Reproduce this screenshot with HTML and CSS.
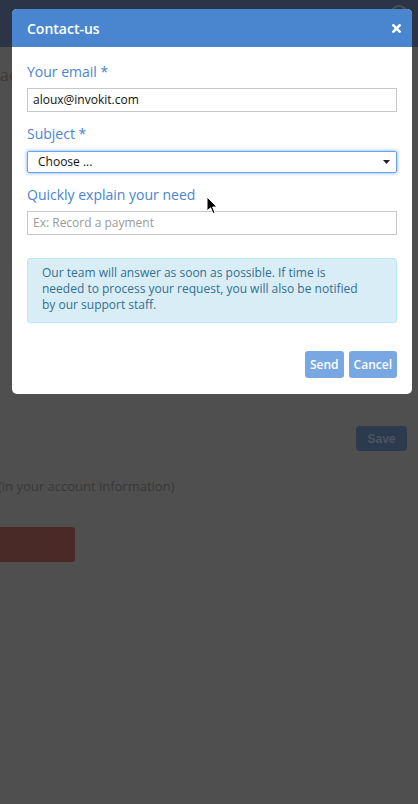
FILE: index.html
```html
<!DOCTYPE html>
<html lang="en">
<head>
<meta charset="utf-8">
<title>Contact-us</title>
<link rel="stylesheet" href="styles.css">
</head>
<body>
<div class="page">
  <div class="topbar">
    <svg class="topbar-user" width="22" height="14" viewBox="0 0 22 14"><path d="M3 12 A8 8 0 0 1 19 12" fill="none" stroke="#4a4f57" stroke-width="2"/></svg>
  </div>
  <div class="page-content">
    <div class="page-title">ad</div>
    <div class="save-row"><span class="btn-save">Save</span></div>
    <p class="note">(in your account information)</p>
    <div class="btn-danger"></div>
  </div>
</div>

<div class="modal">
  <div class="modal-header">
    <span class="modal-title">Contact-us</span>
    <svg class="close" width="9" height="9" viewBox="0 0 9 9"><path d="M1.4 1.4 L7.6 7.6 M7.6 1.4 L1.4 7.6" stroke="#fff" stroke-width="2.6" stroke-linecap="square"/></svg>
  </div>
  <div class="modal-body">
    <div class="group">
      <label class="label">Your email *</label>
      <div class="input">aloux@invokit.com</div>
    </div>
    <div class="group">
      <label class="label">Subject *</label>
      <div class="select">
        <span>Choose ...</span>
        <svg class="caret" width="7" height="4" viewBox="0 0 7 4"><path d="M0 0 H7 L3.5 4 Z" fill="#222"/></svg>
      </div>
    </div>
    <div class="group">
      <label class="label">Quickly explain your need</label>
      <div class="input placeholder">Ex: Record a payment</div>
    </div>
    <div class="alert">Our team will answer as soon as possible. If time is needed to process your request, you will also be notified by our support staff.</div>
  </div>
  <div class="modal-footer">
    <span class="btn">Send</span>
    <span class="btn">Cancel</span>
  </div>
</div>

<svg class="cursor" width="13" height="20" viewBox="0 0 13 20"><path d="M1 1 L1 15 L4.5 11.8 L7 17.5 L9 16.6 L6.6 11 L11 11 Z" fill="#000" stroke="#fff" stroke-width="1" stroke-linejoin="round"/></svg>
</body>
</html>
```
FILE: styles.css
```css
html, body {
  margin: 0;
  padding: 0;
}
body {
  width: 418px;
  height: 804px;
  overflow: hidden;
  background: #4f4f4f;
  font-family: "Open Sans", "DejaVu Sans", sans-serif;
  position: relative;
}
.page {
  display: flex;
  flex-direction: column;
}
.topbar {
  height: 47px;
  background: #2b3547;
  position: relative;
}
.topbar-user {
  position: absolute;
  right: 8px;
  top: 2px;
}
.page-content {
  display: flex;
  flex-direction: column;
}
.page-title {
  margin-top: 16px;
  font-size: 16px;
  line-height: 24px;
  color: #3b3b3b;
}
.save-row {
  display: flex;
  justify-content: flex-end;
  padding-right: 11px;
  margin-top: 339px;
}
.btn-save {
  width: 51px;
  height: 25px;
  box-sizing: border-box;
  display: flex;
  align-items: center;
  justify-content: center;
  background: #2d3a4d;
  border-radius: 4px;
  color: #4c5463;
  font-family: "Liberation Sans", Arial, sans-serif;
  font-weight: bold;
  font-size: 12px;
}
.note {
  margin: 25px 0 0;
  font-size: 13px;
  line-height: 20px;
  color: #383838;
  text-indent: -2px;
}
.btn-danger {
  margin-top: 31px;
  width: 75px;
  height: 35px;
  background: #4a2a27;
  border-radius: 0 3px 3px 0;
}

.modal {
  position: absolute;
  left: 12px;
  top: 9px;
  width: 400px;
  background: #fff;
  border-radius: 5px;
  overflow: hidden;
}
.modal-header {
  height: 38px;
  background: #4a86d0;
  display: flex;
  align-items: center;
  justify-content: space-between;
  padding: 0 11px 0 15px;
  box-sizing: border-box;
}
.modal-title {
  color: #fff;
  font-size: 14px;
  font-weight: 600;
  line-height: 20px;
  margin-top: 1px;
}
.close {
  display: block;
  margin-top: 1px;
}
.modal-body {
  padding: 14px 15px 0;
  display: flex;
  flex-direction: column;
}
.group {
  display: flex;
  flex-direction: column;
  margin-bottom: 11px;
}
.label {
  font-size: 14px;
  line-height: 21px;
  color: #4a84d2;
  margin-bottom: 6px;
}
.input {
  height: 24px;
  box-sizing: border-box;
  border: 1px solid #c8c8c8;
  padding: 0 5px;
  font-size: 12px;
  line-height: 22px;
  color: #111;
}
.placeholder {
  color: #9a9a9a;
}
.select {
  margin-top: 1px;
  height: 22px;
  box-sizing: border-box;
  border: 1px solid #66a3ea;
  box-shadow: 0 0 3px 1px rgba(102, 163, 234, 0.55);
  border-radius: 2px;
  padding: 0 6px 0 10px;
  font-size: 12px;
  line-height: 20px;
  color: #111;
  display: flex;
  align-items: center;
  justify-content: space-between;
}
.caret {
  display: block;
}
.alert {
  margin-top: 12px;
  background: #d9edf7;
  border: 1px solid #bce8f1;
  border-radius: 3px;
  padding: 6px 30px 9px 14px;
  font-size: 12px;
  line-height: 16px;
  color: #31708f;
}
.modal-footer {
  display: flex;
  justify-content: flex-end;
  gap: 5px;
  padding: 28px 15px 16px;
}
.btn {
  height: 27px;
  padding: 0 5px;
  display: flex;
  align-items: center;
  background: #78a7e2;
  color: #fff;
  border-radius: 3px;
  font-size: 12px;
  font-weight: 600;
}
.cursor {
  position: absolute;
  left: 206px;
  top: 196px;
}
```
